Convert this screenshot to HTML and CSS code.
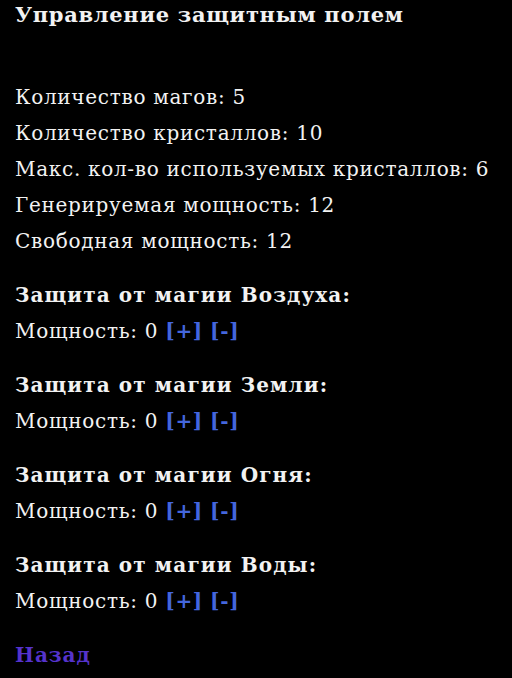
FILE: index.html
```html
<!DOCTYPE html>
<html lang="ru">
<head>
<meta charset="utf-8">
<link rel="stylesheet" href="styles.css">
</head>
<body>
<div class="page">
  <h1 class="title">Управление защитным полем</h1>
  <div class="stats">
    <div class="line">Количество магов: 5</div>
    <div class="line">Количество кристаллов: 10</div>
    <div class="line">Макс. кол-во используемых кристаллов: 6</div>
    <div class="line">Генерируемая мощность: 12</div>
    <div class="line">Свободная мощность: 12</div>
  </div>
  <div class="section">
    <div class="line head">Защита от магии Воздуха:</div>
    <div class="line">Мощность: 0 <a class="btn" href="#">[+]</a> <a class="btn" href="#">[-]</a></div>
  </div>
  <div class="section">
    <div class="line head">Защита от магии Земли:</div>
    <div class="line">Мощность: 0 <a class="btn" href="#">[+]</a> <a class="btn" href="#">[-]</a></div>
  </div>
  <div class="section">
    <div class="line head">Защита от магии Огня:</div>
    <div class="line">Мощность: 0 <a class="btn" href="#">[+]</a> <a class="btn" href="#">[-]</a></div>
  </div>
  <div class="section">
    <div class="line head">Защита от магии Воды:</div>
    <div class="line">Мощность: 0 <a class="btn" href="#">[+]</a> <a class="btn" href="#">[-]</a></div>
  </div>
  <div class="line"><a class="back" href="#">Назад</a></div>
</div>
</body>
</html>
```
FILE: styles.css
```css
html, body {
  margin: 0;
  padding: 0;
  background: #000;
}
.page {
  padding: 0 15px;
  font-family: "DejaVu Serif", "Liberation Serif", serif;
  font-size: 20px;
  letter-spacing: 0.7px;
  color: #f2f2f2;
  display: flex;
  flex-direction: column;
  gap: 18px;
}
.title {
  margin: 0 0 31px 0;
  font-size: 21px;
  letter-spacing: 0.7px;
  line-height: 30px;
  font-weight: bold;
}
.line {
  line-height: 36px;
  white-space: nowrap;
}
.head {
  font-weight: bold;
  letter-spacing: 1.1px;
}
.btn {
  color: #4466dd;
  font-weight: bold;
  text-decoration: none;
}
.back {
  color: #5533cc;
  font-weight: bold;
  letter-spacing: 1px;
  text-decoration: none;
}
```
